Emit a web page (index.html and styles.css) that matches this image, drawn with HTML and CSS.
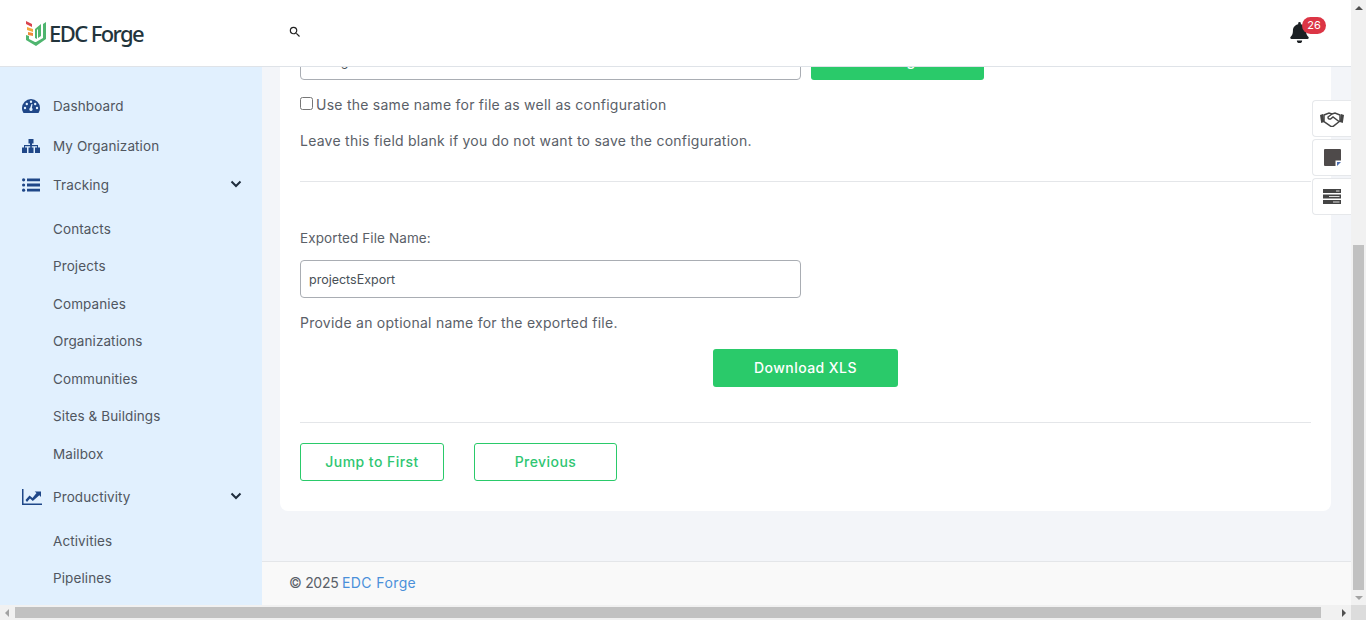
FILE: index.html
```html
<!DOCTYPE html>
<html lang="en">
<head>
    <meta charset="UTF-8">
    <title>EDC Forge - Export</title>
    <link rel="stylesheet" href="styles.css">
</head>
<body>
    <div class="viewport">
        <div class="page">
            <header class="topbar">
                <a class="logo" href="#">
                    <svg class="logo-mark" viewBox="0 0 22 26" width="22" height="26">
                        <path d="M1 1l6 3v3L1 4z" fill="#d9434e"/>
                        <path d="M2 7l6 2v3L2 10z" fill="#f3a93c"/>
                        <path d="M3 12l5 1v3l-5-1z" fill="#ee8a3a"/>
                        <path d="M1 15l3 1v3l6 3 1 0 7-4V4l3-2v17l-10 7L1 20z" fill="#4fb56f"/>
                        <path d="M10 9l6-5v12l-3 2V9l-1 1v9l-2-1z" fill="#4fb56f"/>
                    </svg>
                    <span class="logo-text">EDC Forge</span>
                </a>
                <svg class="search-icon" viewBox="0 0 24 24" width="14" height="14">
                    <path d="M15.5 14h-.79l-.28-.27A6.47 6.47 0 0 0 16 9.5 6.5 6.5 0 1 0 9.5 16c1.61 0 3.09-.59 4.23-1.57l.27.28v.79l5 4.99L20.490 19l-4.990-5zm-6 0C7.010 14 5 11.990 5 9.500S7.010 5 9.500 5 14 7.010 14 9.500 11.990 14 9.500 14z" fill="#222"/>
                </svg>
                <div class="bell">
                    <svg viewBox="0 0 448 512" width="19" height="21">
                        <path d="M224 512a64 64 0 0 0 64-64H160a64 64 0 0 0 64 64zm215-150c-19-21-55-52-55-154 0-78-54-140-128-155V32a32 32 0 1 0-64 0v21C118 68 64 130 64 208c0 102-36 133-55 154a31 31 0 0 0 23 54h384a31 31 0 0 0 23-54z" fill="#1c2024"/>
                    </svg>
                    <span class="badge">26</span>
                </div>
            </header>
            <div class="body-row">
                <nav class="sidebar">
                    <a class="nav-item" href="#">
                        <svg class="nav-icon" viewBox="0 0 18 14"><path d="M9 0a9 9 0 0 0-9 9c0 2 .6 3.500 1.500 5h15c.9-1.500 1.500-3 1.500-5a9 9 0 0 0-9-9zM9 1.600a1.200 1.200 0 1 1 0 2.400A1.200 1.200 0 0 1 9 1.600zM3 10.200a1.200 1.200 0 1 1 0-2.400 1.200 1.200 0 0 1 0 2.400zm1.800-4a1.200 1.200 0 1 1 0-2.400 1.200 1.200 0 0 1 0 2.400zM9 12a1.700 1.700 0 0 1-.8-3.200L9.500 5h1L9.900 8.900A1.700 1.700 0 0 1 9 12zm6-1.800a1.200 1.200 0 1 1 0-2.400 1.200 1.200 0 0 1 0 2.400zm-1.800-4a1.200 1.200 0 1 1 0-2.400 1.200 1.200 0 0 1 0 2.400z" fill-rule="evenodd"/></svg>
                        Dashboard
                    </a>
                    <a class="nav-item" href="#">
                        <svg class="nav-icon" viewBox="0 0 18 14"><path d="M6.500 0h5v4.500h-1.500V6H16v2.500h2V14h-5V8.500h2V7.300H9.800v1.200h1.700V14h-5V8.500h1.700V7.300H3v1.200h2V14H0V8.500h2V6h6V4.500H6.500z"/></svg>
                        My Organization
                    </a>
                    <a class="nav-item nav-parent" href="#">
                        <svg class="nav-icon" viewBox="0 0 18 14"><circle cx="1.600" cy="1.800" r="1.600"/><circle cx="1.600" cy="7" r="1.600"/><circle cx="1.600" cy="12.200" r="1.600"/><path d="M5 .4h13v2.800H5zM5 5.600h13v2.800H5zM5 10.800h13v2.800H5z"/></svg>
                        Tracking
                        <svg class="chevron" viewBox="0 0 12 8"><path d="M1.500 1.500L6 6l4.500-4.500" fill="none" stroke="#1f2d3d" stroke-width="2"/></svg>
                    </a>
                    <ul class="sub-list">
                        <li>Contacts</li>
                        <li>Projects</li>
                        <li>Companies</li>
                        <li>Organizations</li>
                        <li>Communities</li>
                        <li>Sites &amp; Buildings</li>
                        <li>Mailbox</li>
                    </ul>
                    <a class="nav-item nav-parent" href="#">
                        <svg class="nav-icon nav-icon-wide" viewBox="0 0 20 16"><path d="M0 0h1.500v14.500H20V16H0z"/><path d="M3.500 11l4-4.500 3 2.500 4-5-1.800-1.500H19v5.500l-1.700-1.800L10.800 12 8 9.500 5 13z"/></svg>
                        Productivity
                        <svg class="chevron" viewBox="0 0 12 8"><path d="M1.500 1.500L6 6l4.500-4.500" fill="none" stroke="#1f2d3d" stroke-width="2"/></svg>
                    </a>
                    <ul class="sub-list">
                        <li>Activities</li>
                        <li>Pipelines</li>
                    </ul>
                </nav>
                <div class="main">
                    <section class="card">
                        <div class="field-row">
                            <input class="text-input" type="text" value="Configuration">
                            <button class="btn btn-solid btn-save">Save Configuration</button>
                        </div>
                        <label class="check-line"><input type="checkbox"> Use the same name for file as well as configuration</label>
                        <p class="hint hint-config">Leave this field blank if you do not want to save the configuration.</p>
                        <hr class="divider">
                        <label class="field-label">Exported File Name:</label>
                        <input class="text-input" type="text" value="projectsExport">
                        <p class="hint hint-file">Provide an optional name for the exported file.</p>
                        <div class="download-row">
                            <button class="btn btn-solid btn-download">Download XLS</button>
                        </div>
                        <hr class="divider divider-low">
                        <div class="pager">
                            <button class="btn btn-outline btn-first">Jump to First</button>
                            <button class="btn btn-outline btn-prev">Previous</button>
                        </div>
                    </section>
                    <footer class="footer">© 2025 <a href="#">EDC Forge</a></footer>
                </div>
            </div>
            <div class="side-tools">
                <div class="tool">
                    <svg viewBox="0 0 24 16" width="24" height="16">
                        <path d="M0 4l3-1 1.200 8-3 1zM24 4l-3-1-1.200 8 3 1z" fill="#444"/>
                        <path d="M4 4l5-2 3 1 3-1 5 2v6l-6.500 5.200q-1.500.8-3 0L4 10.500z" fill="none" stroke="#444" stroke-width="1.500"/>
                        <path d="M12 3L8 6q0 2.500 2.500 2L13 6l6 4.500" fill="none" stroke="#444" stroke-width="1.500"/>
                    </svg>
                </div>
                <div class="tool">
                    <svg viewBox="0 0 17 17" width="17" height="17"><path d="M1 0h15a1 1 0 0 1 1 1v10.500h-5.500V17H1a1 1 0 0 1-1-1V1a1 1 0 0 1 1-1z" fill="#4e4a4a"/><path d="M13 13h4l-4 4z" fill="#4e6fb0"/></svg>
                </div>
                <div class="tool">
                    <svg viewBox="0 0 18 15" width="18" height="15"><path d="M0 0h18v4H0zM0 5.500h18v4H0zM0 11h18v4H0z" fill="#444"/><path d="M13 1.500h3.500v1H13zM6 7h10.500v1H6zM10 12.500h6.500v1H10z" fill="#ddd"/></svg>
                </div>
            </div>
        </div>
        <div class="vscroll">
            <span class="arrow arrow-up"></span>
            <div class="vtrack"><div class="vthumb"></div></div>
            <span class="arrow arrow-down"></span>
        </div>
    </div>
    <div class="hscroll">
        <span class="arrow arrow-left"></span>
        <div class="htrack"><div class="hthumb"></div></div>
        <span class="arrow arrow-right"></span>
        <span class="corner"></span>
    </div>
</body>
</html>
```
FILE: styles.css
```css
* {
    box-sizing: border-box;
}
body {
    margin: 0;
    height: 620px;
    overflow: hidden;
    font-family: Inter, "Noto Sans", sans-serif;
    color: #5a6068;
    background: #f3f5f9;
    display: flex;
    flex-direction: column;
}

.viewport {
    display: flex;
    height: 605px;
}

.page {
    flex-grow: 1;
    display: flex;
    flex-direction: column;
    position: relative;
    min-width: 0;
}

/* top bar */
.topbar {
    height: 67px;
    flex-shrink: 0;
    background: #fff;
    border-bottom: 1px solid #dfe3e8;
    display: flex;
    align-items: center;
    padding: 0 25px;
    position: relative;
    z-index: 2;
}

.logo {
    display: flex;
    align-items: center;
    gap: 2px;
    width: 263px;
    text-decoration: none;
}

.logo-text {
    font-family: "Noto Sans", sans-serif;
    font-size: 22px;
    font-weight: 500;
    letter-spacing: -1.6px;
    color: #22343c;
}

.search-icon {
    margin-top: -2px;
}

.bell {
    margin-left: auto;
    position: relative;
    height: 21px;
    margin-right: 17px;
    margin-top: -1px;
}

.badge {
    position: absolute;
    left: 12px;
    top: -5px;
    min-width: 24px;
    height: 17px;
    line-height: 17px;
    text-align: center;
    background: #dc3545;
    color: #fff;
    border-radius: 9px;
    font-size: 11px;
}

/* sidebar */
.body-row {
    flex-grow: 1;
    display: flex;
    min-height: 0;
}

.sidebar {
    width: 262px;
    flex-shrink: 0;
    background: #e1f0fe;
    padding-top: 19.300px;
    overflow: hidden;
    font-size: 13.5px;
    letter-spacing: .1px;
}

.nav-item {
    display: flex;
    align-items: center;
    height: 39.500px;
    padding-left: 22px;
    color: #505660;
    text-decoration: none;
}

.nav-icon {
    width: 18px;
    height: 14px;
    margin-right: 13px;
    fill: #1f4788;
}

.nav-icon-wide {
    width: 20px;
    height: 16px;
    margin-right: 11px;
}

.chevron {
    width: 12px;
    height: 8px;
    margin-left: auto;
    margin-right: 20px;
    margin-top: -3px;
}

.sub-list {
    list-style: none;
    margin: 6px 0 4px;
    padding: 0 0 0 53px;
    color: #505660;
}

.sub-list li {
    height: 37.500px;
    line-height: 37.500px;
}

/* main column */
.main {
    flex-grow: 1;
    min-width: 0;
    display: flex;
    flex-direction: column;
    justify-content: flex-end;
    overflow: hidden;
}

.card {
    flex-shrink: 0;
    background: #fff;
    margin: 0 20px 50px 18px;
    padding: 0 20px 30px;
    border-radius: 8px;
    font-size: 14px;
    letter-spacing: .25px;
}

.field-row {
    display: flex;
    gap: 10px;
}

.text-input {
    display: block;
    width: 501px;
    height: 38px;
    padding: 0 8px;
    border: 1px solid #a9adb3;
    border-radius: 4px;
    font: inherit;
    font-size: 12.5px;
    color: #495057;
}

.btn {
    height: 38px;
    padding: 0 0 2px;
    border-radius: 3px;
    font-family: inherit;
    font-size: 14px;
    font-weight: 500;
    letter-spacing: .45px;
}

.btn-solid {
    background: #2aca6a;
    border: none;
    color: #fff;
}

.btn-outline {
    background: #fff;
    border: 1px solid #2aca6a;
    color: #2fc672;
}

.btn-save {
    width: 173px;
}

.check-line {
    display: flex;
    align-items: center;
    gap: 3px;
    margin-top: 13px;
    height: 22px;
}

.check-line input {
    margin: -1px 0 0;
    width: 13px;
    height: 13px;
}

.hint {
    margin: 0;
    line-height: 20px;
}

.hint-config {
    margin-top: 16px;
}

.hint-file {
    margin-top: 15px;
}

.divider {
    border: 0;
    border-top: 1px solid #e4e6e9;
    margin: 30px 0 0;
}

.divider-low {
    margin-top: 35px;
}

.field-label {
    display: block;
    margin: 46px 0 12px;
    line-height: 20px;
    font-size: 13.5px;
    letter-spacing: .1px;
}

.download-row {
    display: flex;
    justify-content: center;
    margin-top: 16px;
}

.btn-download {
    width: 185px;
}

.pager {
    display: flex;
    gap: 30px;
    margin-top: 20px;
}

.btn-first {
    width: 144px;
}

.btn-prev {
    width: 143px;
}

/* footer */
.footer {
    flex-shrink: 0;
    height: 44px;
    line-height: 42px;
    background: #f9f9f9;
    border-top: 1px solid #e4e6e9;
    padding-left: 27px;
    font-size: 14px;
    letter-spacing: -.3px;
}

.footer a {
    color: #4a90d9;
    text-decoration: none;
    letter-spacing: .4px;
}

/* floating tools */
.side-tools {
    position: absolute;
    top: 100px;
    right: 0;
    display: flex;
    flex-direction: column;
    gap: 2px;
    z-index: 3;
}

.tool {
    width: 39px;
    height: 37px;
    background: #fff;
    border: 1px solid #e6e8eb;
    border-right: none;
    border-radius: 4px 0 0 4px;
    display: flex;
    align-items: center;
    justify-content: center;
}

/* scrollbars */
.vscroll {
    width: 15px;
    flex-shrink: 0;
    background: #f1f1f1;
    display: flex;
    flex-direction: column;
    align-items: center;
}

.vtrack {
    flex-grow: 1;
    width: 100%;
    display: flex;
    flex-direction: column;
    justify-content: flex-end;
}

.vthumb {
    height: 345px;
    margin: 0 2px;
    background: #c1c1c1;
}

.hscroll {
    height: 15px;
    flex-shrink: 0;
    display: flex;
    align-items: center;
    background: #f1f1f1;
}

.htrack {
    flex-grow: 1;
    height: 100%;
    padding: 2px 0;
}

.hthumb {
    width: 1306px;
    height: 100%;
    background: #c1c1c1;
}

.corner {
    width: 15px;
    height: 15px;
    background: #dcdcdc;
}

.arrow {
    flex-shrink: 0;
    width: 0;
    height: 0;
    border-style: solid;
    border-color: transparent;
}

.arrow-up {
    margin: 6px 0 5px;
    border-width: 0 4px 4px;
    border-bottom-color: #505050;
}

.arrow-down {
    margin: 6px 0 5px;
    border-width: 4px 4px 0;
    border-top-color: #a3a3a3;
}

.arrow-left {
    margin: 0 6px 0 5px;
    border-width: 4px 4px 4px 0;
    border-right-color: #a3a3a3;
}

.arrow-right {
    margin: 0 5px 0 6px;
    border-width: 4px 0 4px 4px;
    border-left-color: #505050;
}
```
